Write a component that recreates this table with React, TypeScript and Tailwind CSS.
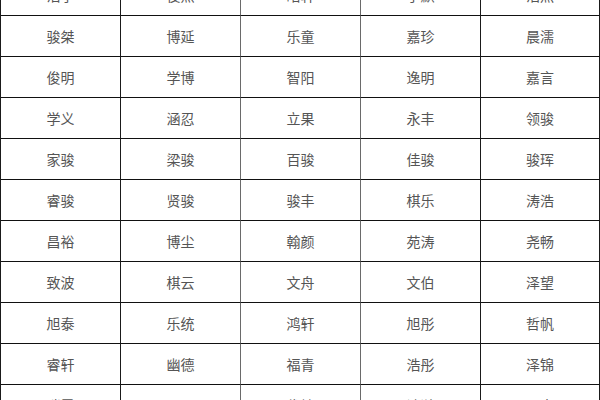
import React from "react";

const rows: string[][] = [
  ["浩宇", "俊熙", "皓轩", "子默", "浩然"],
  ["骏桀", "博延", "乐童", "嘉珍", "晨濡"],
  ["俊明", "学博", "智阳", "逸明", "嘉言"],
  ["学义", "涵忍", "立果", "永丰", "领骏"],
  ["家骏", "梁骏", "百骏", "佳骏", "骏珲"],
  ["睿骏", "贤骏", "骏丰", "棋乐", "涛浩"],
  ["昌裕", "博尘", "翰颜", "苑涛", "尧畅"],
  ["致波", "棋云", "文舟", "文伯", "泽望"],
  ["旭泰", "乐统", "鸿轩", "旭彤", "哲帆"],
  ["睿轩", "幽德", "福青", "浩彤", "泽锦"],
  ["瑞霖", "晨阳", "俊楠", "浩瀚", "明杰"],
];

const colBorder = [
  "border-r-[#1a1a1a]",
  "border-r-[#6a6a6a]",
  "border-r-[#6a6a6a]",
  "border-r-[#1a1a1a]",
  "border-r-[#1a1a1a]",
];

export default function App() {
  return (
    <div className="w-[600px] h-[400px] overflow-hidden bg-white">
      <div
        className="-mt-[25px] grid grid-cols-[120px_120px_120px_120px_119px] border-l border-l-[#1a1a1a]"
        style={{ fontFamily: '"Noto Sans CJK SC", "Noto Sans", sans-serif' }}
      >
        {rows.map((r, ri) =>
          r.map((name, ci) => (
            <div
              key={`${ri}-${ci}`}
              className={`h-[41px] flex items-center justify-center border-b border-b-[#111111] border-r ${colBorder[ci]} text-[14px] text-[#555555]`}
            >
              {name}
            </div>
          ))
        )}
      </div>
    </div>
  );
}
